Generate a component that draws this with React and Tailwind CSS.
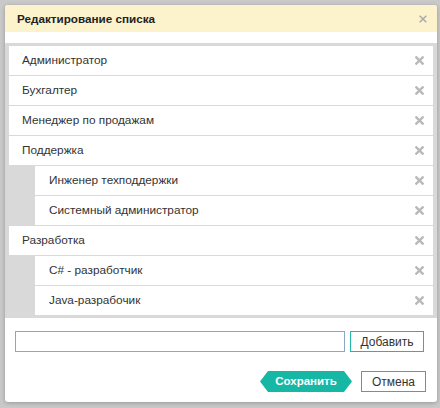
import React from "react";

const items = [
  { name: "Администратор" },
  { name: "Бухгалтер" },
  { name: "Менеджер по продажам" },
  { name: "Поддержка" },
  { name: "Инженер техподдержки", child: true },
  { name: "Системный администратор", child: true },
  { name: "Разработка" },
  { name: "C# - разработчик", child: true },
  { name: "Java-разрабочик", child: true },
];

const Cross = ({ size = 9, stroke = 2.6, color = "#b9b9b9" }) => (
  <svg width={size} height={size} viewBox="0 0 10 10">
    <path d="M1.5 1.5 L8.5 8.5 M8.5 1.5 L1.5 8.5" stroke={color} strokeWidth={stroke} strokeLinecap="square" />
  </svg>
);

const App = () => {
  return (
    <div className="w-[440px] h-[408px] bg-[#c9c9c9] p-[5px] font-['Liberation_Sans',Arial,sans-serif] text-[#333]">
      <div className="w-[432px] h-[397px] bg-white rounded-[3px] shadow-[0_1px_4px_rgba(0,0,0,0.25)] overflow-hidden flex flex-col">
        {/* Header */}
        <div className="h-[27px] bg-[#fcf3cd] flex items-center justify-between pl-[12px] pr-[10px]">
          <h3 className="text-[11.7px] font-bold text-[#222]">Редактирование списка</h3>
          <Cross size={8} stroke={1.9} color="#aaa" />
        </div>

        {/* List */}
        <div className="mt-[11px] bg-[#d9d9d9] px-[4px] pt-[3px] pb-[3px] flex flex-col gap-[1px]">
          {items.map((item) => (
            <div
              key={item.name}
              className={
                item.child
                  ? "ml-[26px] h-[29px] bg-white flex items-center justify-between pl-[14px] pr-[9px] text-[11.8px]"
                  : "h-[29px] bg-white flex items-center justify-between pl-[13px] pr-[9px] text-[11.8px]"
              }
            >
              <span>{item.name}</span>
              <Cross />
            </div>
          ))}
        </div>

        {/* Add row */}
        <div className="mt-[13px] flex items-center pl-[10px] pr-[13px] gap-[5px]">
          <input
            type="text"
            className="h-[21px] w-[330px] border border-[#8ea7bf] outline-none px-1 text-[12px]"
          />
          <button className="h-[21px] w-[74px] border border-[#22b8a7] text-[12px] text-[#333] bg-white">
            Добавить
          </button>
        </div>

        {/* Actions */}
        <div className="mt-[19px] flex items-center justify-end pr-[11px] gap-[9px]">
          <button className="h-[21px] w-[92px] bg-[#16b8a5] text-white font-bold text-[11.5px] [clip-path:polygon(8px_0,calc(100%-8px)_0,100%_50%,calc(100%-8px)_100%,8px_100%,0_50%)]">
            Сохранить
          </button>
          <button className="h-[21px] w-[65px] border border-[#22b8a7] text-[12px] text-[#333] bg-white">
            Отмена
          </button>
        </div>
      </div>
    </div>
  );
};

export default App;
